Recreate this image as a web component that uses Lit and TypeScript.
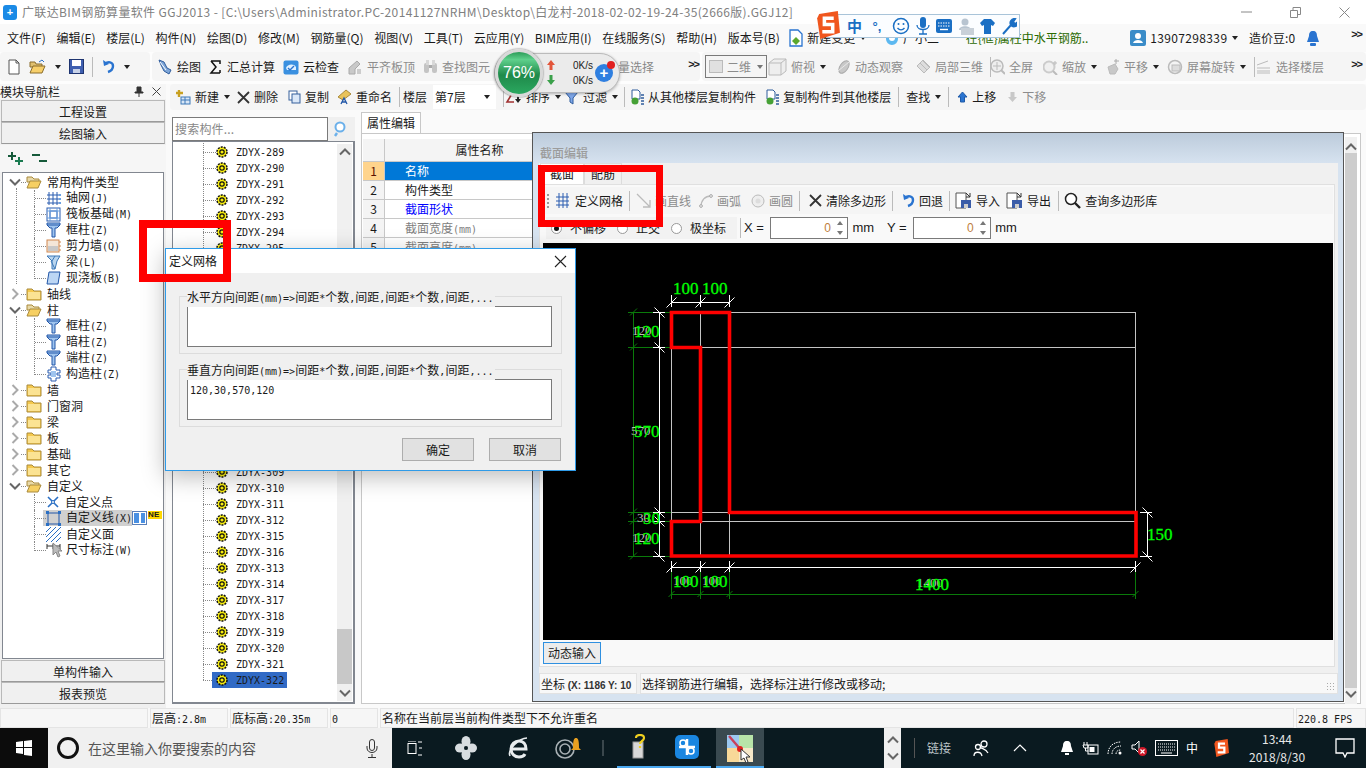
import { LitElement, html, css, svg, nothing } from 'lit';
import { customElement } from 'lit/decorators.js';

const ic = (w: number, h: number, body: unknown) =>
  html`<svg class="ic" width=${w} height=${h} viewBox="0 0 ${w} ${h}">${body}</svg>`;

// --- small icons, drawn roughly like the old toolbar bitmaps ---
const folderClosed = ic(16, 14, svg`<path d="M1 2h5l2 2h7v9H1z" fill="#f5c94e" stroke="#a98a3c"/><rect x="2" y="5" width="12" height="7" fill="#fbe393"/>`);
const folderOpen = ic(16, 14, svg`<path d="M1 2h5l2 2h5v3H1z" fill="#e8d9a8" stroke="#a98a3c"/><path d="M1 13l3-7h11l-3 7z" fill="#f6cf62" stroke="#a98a3c"/>`);
const pillar = ic(15, 16, svg`<path d="M1 1h13v2l-3 3h-2v9H6V6H4L1 3z" fill="#9fc4ee" stroke="#2257a8"/><path d="M1 3h13" stroke="#2257a8"/>`);
const axisGrid = ic(15, 15, svg`<g stroke="#2a5db0" fill="none"><path d="M3 1v13M7 1v13M11 1v13M1 4h12M1 8h12M1 12h12"/></g><g fill="#6aa0e0"><rect x="13" y="3" width="2" height="2"/><rect x="13" y="7" width="2" height="2"/><rect x="13" y="11" width="2" height="2"/></g>`);
const raft = ic(15, 15, svg`<rect x="1" y="1" width="13" height="13" fill="#fff" stroke="#2a5db0"/><rect x="4" y="4" width="7" height="7" fill="none" stroke="#2a5db0"/><path d="M1 4h13M1 11h13M4 1v13M11 1v13" stroke="#6aa0e0"/>`);
const wall = ic(15, 14, svg`<rect x="1" y="1" width="12" height="12" fill="#f4e6d8" stroke="#d08850"/><rect x="2" y="7" width="10" height="5" fill="#c8c8c8"/><path d="M13 3h2M13 7h2M13 11h2" stroke="#d08850"/>`);
const beam = ic(15, 16, svg`<path d="M1 2h13l-3 5-2 8H6V7z" fill="#b9d5ef" stroke="#3c78b8"/><path d="M5 7l4 8M9 2l-3 5" stroke="#3c78b8"/>`);
const slab = ic(15, 14, svg`<path d="M3 1h11l-2 12H1z" fill="#bcd6f4" stroke="#2257a8"/>`);
const construct = ic(15, 16, svg`<path d="M5 1h5v3h4v3h-3v2h3v3h-4v3H5v-3H2V9h3V7H2V4h3z" fill="#fff" stroke="#2a5db0"/><rect x="5" y="5" width="5" height="6" fill="#9fc4ee"/>`);
const cross = ic(14, 14, svg`<path d="M2 2l10 10M12 2L2 12" stroke="#2a6fc4" stroke-width="1.6"/><circle cx="7" cy="7" r="1.5" fill="#fff" stroke="#2a6fc4"/>`);
const cusLine = ic(15, 15, svg`<rect x="2" y="2" width="11" height="11" fill="none" stroke="#2257a8"/><g fill="#2a6fc4"><rect x="0" y="0" width="3" height="3"/><rect x="12" y="0" width="3" height="3"/><rect x="0" y="12" width="3" height="3"/><rect x="12" y="12" width="3" height="3"/></g>`);
const hatch = ic(15, 15, svg`<g stroke="#2a6fc4"><path d="M0 5L5 0M0 10L10 0M0 15L15 0M5 15L15 5M10 15L15 10"/></g>`);
const dimIcon = ic(15, 15, svg`<path d="M1 3h13M1 1v5M14 1v5M7 1v5" stroke="#333" fill="none"/>`);
const gear = ic(12, 12, svg`<circle cx="6" cy="6" r="5" fill="#f8ee10" stroke="#111" stroke-width="1.5" stroke-dasharray="2 1.1"/><circle cx="6" cy="6" r="2.2" fill="none" stroke="#111" stroke-width="1.2"/>`);
const pageNew = ic(14, 16, svg`<path d="M2 1h7l3 3v11H2z" fill="#fff" stroke="#555"/><path d="M9 1v3h3" fill="none" stroke="#555"/>`);
const openFolder = ic(17, 15, svg`<path d="M1 3h5l1 2h6v3H1z" fill="#e0c070" stroke="#8a6d2c"/><path d="M1 14l3-7h12l-3 7z" fill="#f7cf6a" stroke="#8a6d2c"/><path d="M10 3l3-2 2 2" fill="none" stroke="#2a6fc4"/>`);
const save = ic(15, 15, svg`<rect x="0.5" y="0.5" width="14" height="14" fill="#3f5fb0" stroke="#1e3470"/><rect x="3" y="1" width="9" height="6" fill="#fff"/><rect x="4" y="10" width="7" height="4" fill="#c8d2e8"/>`);
const undo = ic(14, 15, svg`<path d="M2 1l1 6 5-2" fill="#2a74d0"/><path d="M4 5c3-3 8-2 8 2 0 3-2 5-5 6" fill="none" stroke="#2a74d0" stroke-width="2.4"/>`);
const draw = ic(16, 17, svg`<path d="M2 2l5 2 3 6 4 2-2 4-5-3-3-6z" fill="#7ea6d8" stroke="#2f5c9c"/><path d="M3 4l6 8" stroke="#fff"/>`);
const sigma = ic(14, 14, svg`<path d="M2 1h9v3M11 13H2l5-6-5-6M11 10v3" fill="none" stroke="#111" stroke-width="1.5"/>`);
const cloudCheck = ic(16, 16, svg`<rect x="0.5" y="1.5" width="15" height="14" rx="2" fill="#3a90e0"/><path d="M3 9c1-4 8-5 10-1v3H4z" fill="#dff0ff"/><path d="M5 9l2 2 4-4" fill="none" stroke="#2a74d0" stroke-width="1.4"/>`);
const gLevel = ic(16, 16, svg`<path d="M2 9l8-7 3 3-5 5v5H2z" fill="#c9c9c9" stroke="#aaa"/><rect x="10" y="10" width="4" height="5" fill="#ccc"/>`);
const binoc = ic(15, 15, svg`<rect x="1" y="4" width="5" height="10" rx="2" fill="#c4c4c4"/><rect x="9" y="4" width="5" height="10" rx="2" fill="#c4c4c4"/><rect x="3" y="1" width="3" height="5" fill="#d8d8d8"/><rect x="9" y="1" width="3" height="5" fill="#d8d8d8"/><rect x="6" y="6" width="3" height="3" fill="#aaa"/>`);
const cube = ic(19, 18, svg`<path d="M1 5l5-4h12v12l-5 4H1zM1 5h12v12M13 5l5-4" fill="#eee" stroke="#bbb"/>`);
const orbit = ic(15, 16, svg`<ellipse cx="8" cy="8" rx="4" ry="7" transform="rotate(35 8 8)" fill="#c8c8c8" stroke="#aaa"/><path d="M2 12l11-9" stroke="#e8e8e8"/>`);
const part3d = ic(16, 15, svg`<path d="M2 7l6-6 7 7-6 6z" fill="#ddd" stroke="#bbb"/><path d="M5 4l7 7M8 2l6 6" stroke="#bbb"/>`);
const zoomAll = ic(15, 16, svg`<circle cx="7" cy="7" r="6" fill="#eee" stroke="#bbb" stroke-width="1.5"/><path d="M7 3v8M3 7h8" stroke="#bbb"/><path d="M11 11l4 4" stroke="#bbb" stroke-width="2"/>`);
const zoomIn = ic(15, 16, svg`<circle cx="6" cy="8" r="5.5" fill="#f0f0f0" stroke="#ccc" stroke-width="2"/><path d="M10 12l4 4" stroke="#bbb" stroke-width="2"/><path d="M12 2v4M10 4h4" stroke="#bbb"/>`);
const pan = ic(15, 17, svg`<path d="M3 9l7-3 3 5-3 5H5z" fill="#c8c8c8" stroke="#bbb"/><path d="M11 1v5M9 3h5" stroke="#aaa"/>`);
const rotate = ic(16, 16, svg`<circle cx="8" cy="8" r="6.5" fill="#f4f4f4" stroke="#bbb" stroke-width="1.5"/><rect x="5" y="6" width="8" height="6" fill="#ddd" stroke="#bbb"/>`);
const floors = ic(16, 15, svg`<path d="M1 6l11-4M1 9h13M1 12h13M1 14h13" stroke="#bbb" fill="none"/>`);
const plusNew = ic(16, 16, svg`<path d="M4 1v7M1 4h7" stroke="#c8a020" stroke-width="2.4"/><rect x="6" y="8" width="9" height="7" fill="#d8e6f6" stroke="#3c78b8"/><path d="M6 11h9M10 8v7" stroke="#3c78b8"/>`);
const xMark = ic(13, 13, svg`<path d="M1 1l11 11M12 1L1 12" stroke="#333" stroke-width="1.8"/>`);
const copy = ic(13, 14, svg`<rect x="1" y="1" width="8" height="9" fill="#fff" stroke="#36609c"/><rect x="4" y="4" width="8" height="9" fill="#dbe8f8" stroke="#36609c"/>`);
const rename = ic(15, 16, svg`<path d="M1 8l8-7 5 4-8 6z" fill="#e9c35a" stroke="#a98a3c"/><path d="M4 15l3-6 3 6M5 13h4" fill="none" stroke="#2257a8" stroke-width="1.3"/>`);
const sortIcon = ic(17, 14, svg`<path d="M1 2h7L2 12h7" fill="none" stroke="#a03030" stroke-width="1.6"/><path d="M13 1v9" stroke="#222" stroke-width="2"/><path d="M10 9h6l-3 4z" fill="#222"/>`);
const funnel = ic(15, 15, svg`<path d="M1 2h13L9 8v6l-3-2V8z" fill="#7ea6e8" stroke="#2f5c9c"/>`);
const copyFloor = ic(14, 17, svg`<path d="M2 1h6l2 2v7H2z" fill="#fff" stroke="#2f5c9c"/><circle cx="5" cy="12" r="3.5" fill="#45a035"/><path d="M11 6h3M11 9h3M11 12h3M11 15h3" stroke="#2f5c9c" stroke-width="1.4"/>`);
const arrowUp = ic(11, 12, svg`<path d="M5.5 1L10 6H7.5v5h-4V6H1z" fill="#2a74d0" stroke="#1e5aa8"/>`);
const arrowDown = ic(11, 12, svg`<path d="M5.5 11L10 6H7.5V1h-4v5H1z" fill="#c8c8c8"/>`);
const pageGreen = ic(14, 18, svg`<path d="M1 1h8l4 4v12H1z" fill="#fff" stroke="#2a74d0" stroke-width="1.3"/><path d="M7 8l4 4-4 4-4-4z" fill="#5ca82c"/>`);
const helper = ic(14, 16, svg`<path d="M1 3c4 2 8 2 12 0v6a6 6 0 01-12 0z" fill="#5cb8f0"/><circle cx="7" cy="8" r="3" fill="#fff"/>`);
const userBox = ic(16, 16, svg`<rect width="16" height="16" rx="2" fill="#3a8cc8"/><circle cx="8" cy="6" r="3" fill="#fff"/><path d="M3 13c1-4 9-4 10 0z" fill="#fff"/>`);
const bell = ic(14, 17, svg`<path d="M7 1c3 0 4 2 4 5l2 6H1l2-6c0-3 1-5 4-5z" fill="#2a74d0"/><rect x="4" y="13" width="6" height="3" rx="1" fill="#2a74d0"/>`);
const pin = ic(10, 11, svg`<path d="M3 1h4v5h2v1H1V6h2zM5 7v4" fill="#333" stroke="#333"/>`);
const plusLeft = ic(17, 15, svg`<path d="M5 1v8M1 5h8" stroke="#165a3a" stroke-width="2"/><path d="M12 6v8M8 10h8" stroke="#1a7a50" stroke-width="2"/>`);
const minusLeft = ic(17, 15, svg`<path d="M1 4h8M8 10h8" stroke="#165a3a" stroke-width="2"/>`);
const mag = ic(16, 16, svg`<circle cx="7" cy="6" r="4.5" fill="#fff" stroke="#6bb0ea" stroke-width="2"/><path d="M4 12l-2 3" stroke="#6bb0ea" stroke-width="2.4"/>`);
const grid = ic(15, 15, svg`<g stroke="#2a5db0" fill="none"><path d="M3 0v15M7 0v15M11 0v15M0 4h13M0 8h13M0 12h13"/></g>`);
const arrowLine = ic(15, 15, svg`<path d="M1 1l13 13M14 7v7H7" fill="none" stroke="#bbb" stroke-width="1.3"/>`);
const arc = ic(14, 14, svg`<path d="M2 13C2 6 6 2 12 2" fill="none" stroke="#bbb" stroke-width="1.4"/><circle cx="2" cy="12" r="1.4" fill="#eee" stroke="#aaa"/><circle cx="12" cy="2" r="1.4" fill="#eee" stroke="#aaa"/>`);
const ring = ic(14, 14, svg`<circle cx="7" cy="7" r="6" fill="#eee" stroke="#bbb"/><circle cx="7" cy="7" r="2.5" fill="#ddd"/>`);
const floppyIn = ic(17, 17, svg`<path d="M1 1h10v15H1z" fill="#fff" stroke="#555"/><rect x="6" y="8" width="10" height="8" fill="#3a5ca8"/><rect x="9" y="12" width="4" height="4" fill="#ccc"/><path d="M11 1l4 4M15 1v4h-4" fill="none" stroke="#333"/>`);
const search = ic(17, 17, svg`<circle cx="7" cy="7" r="5.5" fill="#fff" stroke="#222" stroke-width="1.5"/><path d="M11 11l5 5" stroke="#222" stroke-width="2.4"/>`);

const win = ic(16, 16, svg`<path d="M0 2l7-1v6H0zM8 1l8-1v7H8zM0 8h7v6l-7-1zM8 8h8v8l-8-1z" fill="#fff"/>`);
const taskView = ic(15, 15, svg`<rect x="1" y="2.5" width="8" height="10" fill="none" stroke="#fff"/><path d="M11 1h4M12 7h3M11 14h4M1 0h8" stroke="#fff"/>`);
const fan = ic(22, 24, svg`<g fill="#d8dde0"><ellipse cx="11" cy="5.5" rx="4.5" ry="5.5"/><ellipse cx="11" cy="18.5" rx="4.5" ry="5.5"/><ellipse cx="5" cy="12" rx="5" ry="4.5"/><ellipse cx="17" cy="12" rx="5" ry="4.5"/></g><circle cx="11" cy="12" r="2" fill="#0a1a20"/>`);
const ie = ic(22, 24, svg`<path d="M4 13h15c0-5-3-8-7-8s-8 3-8 8 4 8 8 8c3 0 5-1 6-3" fill="none" stroke="#e8ecee" stroke-width="3"/><path d="M3 20C0 14 12 2 20 2" fill="none" stroke="#e8ecee" stroke-width="1.6"/>`);
const swirl = ic(28, 24, svg`<path d="M12 4a9 9 0 100 18 9 9 0 000-18zM12 8a5 5 0 100 10 5 5 0 000-10" fill="none" stroke="#a8b0b4" stroke-width="1.6"/><path d="M20 12c0-8 1-10 3-10s3 2 3 10l2 2H18z" fill="#e8a020"/>`);
const quest = ic(18, 26, svg`<rect x="1" y="8" width="10" height="16" fill="#d8d8d8" stroke="#999"/><path d="M4 4c0-4 8-4 8 0 0 3-4 3-4 6M8 12v2" fill="none" stroke="#f0d020" stroke-width="2.2"/>`);
const bluePlus = ic(24, 24, svg`<rect width="24" height="24" rx="5" fill="#1a86e0"/><path d="M12 4v16M4 12h16" stroke="#fff" stroke-width="2.5"/><circle cx="8" cy="8" r="3" fill="none" stroke="#fff" stroke-width="1.5"/><circle cx="16" cy="16" r="3" fill="none" stroke="#fff" stroke-width="1.5"/>`);
const mapApp = ic(30, 32, svg`<rect x="2" y="4" width="12" height="13" fill="#9cc8f0"/><rect x="14" y="4" width="14" height="13" fill="#b8e4a8"/><rect x="2" y="17" width="12" height="14" fill="#f8d898"/><rect x="14" y="17" width="14" height="14" fill="#f6e8c8"/><path d="M4 5l12 14" stroke="#c8405a" stroke-width="2.4"/><circle cx="15" cy="18" r="3" fill="#e02020"/><path d="M16 18v11l3-2 2 5 2-1-2-5h4z" fill="#fff" stroke="#333"/>`);
const person = ic(16, 18, svg`<circle cx="11" cy="5" r="3" fill="none" stroke="#fff" stroke-width="1.3"/><circle cx="5" cy="8" r="2.5" fill="none" stroke="#fff" stroke-width="1.3"/><path d="M1 17c0-5 7-5 8 0M7 8c2 2 6 2 8 6" fill="none" stroke="#fff" stroke-width="1.3"/>`);
const caretUp = ic(14, 8, svg`<path d="M1 7l6-6 6 6" fill="none" stroke="#fff" stroke-width="1.2"/>`);
const trayBell = ic(14, 16, svg`<path d="M7 1c3 0 4 2 4 5l2 6H1l2-6c0-3 1-5 4-5zM5 13h4v2H5z" fill="#fff"/>`);
const plug = ic(17, 14, svg`<path d="M2 1v3M5 1v3M1 4h5v3H2z" stroke="#fff" fill="none"/><path d="M3.5 7v3h3" stroke="#fff" fill="none"/><rect x="6" y="4" width="10" height="9" fill="none" stroke="#fff"/><rect x="7.5" y="6" width="5" height="5" fill="#fff"/>`);
const wifi = ic(16, 14, svg`<g fill="none" stroke="#fff" stroke-dasharray="1.5 1"><path d="M1 13c0-7 5-12 13-12"/><path d="M5 13c0-4 3-8 9-8"/><path d="M9 13c0-2 1-4 5-4"/></g><circle cx="13" cy="12" r="1.5" fill="#fff"/>`);
const speaker = ic(16, 16, svg`<path d="M1 5h3l4-4v12L4 9H1z" fill="none" stroke="#fff"/><circle cx="11.5" cy="11.5" r="4.5" fill="#d01828"/><path d="M9.5 9.5l4 4M13.5 9.5l-4 4" stroke="#fff" stroke-width="1.2"/>`);
const keyb = ic(23, 16, svg`<rect x="0.5" y="0.5" width="22" height="15" fill="none" stroke="#fff"/><path d="M3 4h17M3 7h17M3 10h17" stroke="#fff" stroke-dasharray="1 1"/><path d="M6 13h11" stroke="#fff"/>`);
const sogouS = (w: number, h: number) => html`<svg class="ic" width=${w} height=${h} viewBox="0 0 24 27"><path d="M4 3l18-3 2 21-19 6-3-20z" fill="#f0561e"/><path d="M18 7H9v6h8v7H7" fill="none" stroke="#fff" stroke-width="3.4"/></svg>`;
const notif = ic(20, 20, svg`<path d="M1 1h18v14h-7l-2 4-2-4H1z" fill="none" stroke="#fff" stroke-width="1.3"/>`);
const chevR = ic(8, 12, svg`<path d="M1.5 1l5 5-5 5" fill="none" stroke="#aaa" stroke-width="2"/>`);
const chevD = ic(12, 8, svg`<path d="M1 1.5l5 5 5-5" fill="none" stroke="#666" stroke-width="2"/>`);
const chevU = ic(12, 8, svg`<path d="M1 6.5l5-5 5 5" fill="none" stroke="#666" stroke-width="2"/>`);

// split ascii out so latin sits at half the width of a cjk character, like SimSun
const bitmap = (s: string) =>
  s.split(/([\x20-\x7e]+)/).map((p, i) => (i % 2 ? html`<span class="lat">${p}</span>` : p));

interface TreeRow { lv: number; label: string; open?: boolean; icon?: unknown; last?: boolean; sel?: boolean; }
const tree: TreeRow[] = [
  { lv: 0, open: true, label: '常用构件类型' },
  { lv: 1, icon: axisGrid, label: '轴网(J)' },
  { lv: 1, icon: raft, label: '筏板基础(M)' },
  { lv: 1, icon: pillar, label: '框柱(Z)' },
  { lv: 1, icon: wall, label: '剪力墙(Q)' },
  { lv: 1, icon: beam, label: '梁(L)' },
  { lv: 1, icon: slab, label: '现浇板(B)', last: true },
  { lv: 0, label: '轴线' },
  { lv: 0, open: true, label: '柱' },
  { lv: 1, icon: pillar, label: '框柱(Z)' },
  { lv: 1, icon: pillar, label: '暗柱(Z)' },
  { lv: 1, icon: pillar, label: '端柱(Z)' },
  { lv: 1, icon: construct, label: '构造柱(Z)', last: true },
  { lv: 0, label: '墙' },
  { lv: 0, label: '门窗洞' },
  { lv: 0, label: '梁' },
  { lv: 0, label: '板' },
  { lv: 0, label: '基础' },
  { lv: 0, label: '其它' },
  { lv: 0, open: true, label: '自定义' },
  { lv: 1, icon: cross, label: '自定义点' },
  { lv: 1, icon: cusLine, label: '自定义线(X)', sel: true },
  { lv: 1, icon: hatch, label: '自定义面' },
  { lv: 1, icon: dimIcon, label: '尺寸标注(W)', last: true },
];

const listNames = [
  289, 290, 291, 292, 293, 294, 295, 296, 297, 298, 299, 300, 301, 302, 303, 304, 305, 306, 307, 308, 309, 310, 311,
  312, 315, 316, 313, 314, 317, 318, 319, 320, 321, 322,
];

// g is the extra space before an item, the toolbars are not evenly spaced
interface Tool { i?: unknown; t?: string; c?: boolean; d?: boolean; sep?: boolean; g?: number; }
const barB: Tool[] = [
  { i: draw, t: '绘图' },
  { i: sigma, t: '汇总计算' },
  { i: cloudCheck, t: '云检查' },
  { i: gLevel, t: '平齐板顶', d: true },
  { i: binoc, t: '查找图元', d: true },
];
const barC: Tool[] = [
  { i: cube, t: '俯视', c: true, d: true, g: -7 },
  { i: orbit, t: '动态观察', d: true, g: 2 },
  { i: part3d, t: '局部三维', d: true, g: 4 },
  { sep: true, g: -1 },
  { i: zoomAll, t: '全屏', d: true, g: -9 },
  { i: zoomIn, t: '缩放', c: true, d: true, g: 2 },
  { i: pan, t: '平移', c: true, d: true },
  { i: rotate, t: '屏幕旋转', c: true, d: true },
  { sep: true },
  { i: floors, t: '选择楼层', d: true, g: -7 },
];
const secondLeft: Tool[] = [
  { i: plusNew, t: '新建', c: true },
  { i: xMark, t: '删除' },
  { i: copy, t: '复制', g: 3 },
  { i: rename, t: '重命名', g: 1 },
  { sep: true },
];
const secondRight: Tool[] = [
  { sep: true },
  { i: sortIcon, t: '排序', c: true, g: -6 },
  { i: funnel, t: '过滤', c: true, g: -4 },
  { sep: true, g: -1 },
  { i: copyFloor, t: '从其他楼层复制构件', g: -2 },
  { i: copyFloor, t: '复制构件到其他楼层', g: 2 },
  { sep: true },
  { t: '查找', c: true },
  { sep: true },
  { i: arrowUp, t: '上移', g: 1 },
  { i: arrowDown, t: '下移', d: true, g: 4 },
];
const editBar: Tool[] = [
  { i: grid, t: '定义网格' },
  { sep: true },
  { i: arrowLine, t: '画直线', d: true },
  { i: arc, t: '画弧', d: true, g: 2 },
  { i: ring, t: '画圆', d: true, g: 4 },
  { sep: true },
  { i: xMark, t: '清除多边形', g: 3 },
  { sep: true },
  { i: undo, t: '回退', g: 2 },
  { sep: true },
  { i: floppyIn, t: '导入', g: -1 },
  { i: floppyIn, t: '导出' },
  { sep: true, g: 1 },
  { i: search, t: '查询多边形库', g: -1 },
];
const menus = ['文件(F)', '编辑(E)', '楼层(L)', '构件(N)', '绘图(D)', '修改(M)', '钢筋量(Q)', '视图(V)', '工具(T)', '云应用(Y)', 'BIM应用(I)', '在线服务(S)', '帮助(H)', '版本号(B)'];

const tool = (x: Tool) => {
  const extra = x.g ? `margin-left:${x.g}px` : '';
  return x.sep
    ? html`<span class="sep" style=${extra}></span>`
    : html`<span class="tool ${x.d ? 'off' : ''}" style=${extra}>${x.i ?? nothing}<span>${x.t}</span>${x.c ? html`<i class="caret"></i>` : nothing}</span>`;
};

// section drawing, in screen coordinates through the viewBox
const cadX = [671.5, 700.5, 729.5, 1135.5];
const cadY = [312.5, 347.5, 512.5, 521.5, 556.5];
const tick = (x: number, y: number, flip = false) =>
  flip
    ? svg`<path d="M${x - 5} ${y - 5}L${x + 5} ${y + 5}" stroke="#fff"/>`
    : svg`<path d="M${x - 5} ${y + 5}L${x + 5} ${y - 5}" stroke="#fff"/>`;
const cad = svg`
  <g stroke="#c4c4c4" fill="none">
    ${cadX.map((x) => svg`<path d="M${x} 312V557"/>`)}
    ${cadY.map((y) => svg`<path d="M671 ${y}H1136"/>`)}
  </g>
  <g stroke="#0a7a0a" fill="none">
    <path d="M633.5 312V557"/>
    ${cadY.map((y) => svg`<path d="M628 ${y}H671"/><path d="M630 ${y + 3}l7 -7"/>`)}
    <path d="M671 594.5H1136"/>
    ${cadX.map((x) => svg`<path d="M${x} 572V599"/><path d="M${x - 3} 597l6 -6"/>`)}
  </g>
  <g stroke="#fff" fill="none">
    <path d="M671 302.5H730M659.5 312V557M671 567.5H1136M1147.5 512V557"/>
    ${cadX.slice(0, 3).map((x) => svg`<path d="M${x} 295V307"/>`)}
    ${cadY.map((y) => svg`<path d="M653 ${y}H665"/>`)}
    ${cadX.map((x) => svg`<path d="M${x} 561V572"/>`)}
    <path d="M1140 512.5H1152M1140 556.5H1152"/>
  </g>
  ${cadX.slice(0, 3).map((x) => tick(x, 302.5))}
  ${cadY.map((y) => tick(659.5, y, true))}
  ${cadX.map((x) => tick(x, 567.5))}
  ${tick(1147.5, 512.5, true)}${tick(1147.5, 556.5, true)}
  <path d="M671.5 312.5H729.5V512.5H1136V556H671.5V521.5H700.5V347.5H671.5Z" fill="none" stroke="#ff0000" stroke-width="3.6"/>
  <g class="gtext">
    <text x="632" y="335">120</text><text x="631" y="435">570</text><text x="637" y="522">30</text><text x="632" y="542">120</text>
    <text x="673" y="585">100</text><text x="702" y="585">100</text><text x="917" y="587">1400</text>
  </g>
  <g class="ctext">
    <text x="673" y="294">100</text><text x="702" y="294">100</text>
    <text x="634" y="337">120</text><text x="634" y="437">570</text><text x="643" y="524">30</text><text x="634" y="544">120</text>
    <text x="673" y="587">100</text><text x="702" y="587">100</text><text x="915" y="590">1400</text><text x="1147" y="540">150</text>
  </g>`;

@customElement('app-root')
export class AppRoot extends LitElement {
  static styles = css`
    :host {
      display: block;
      position: relative;
      width: 1366px;
      height: 768px;
      overflow: hidden;
      background: #fafafa;
      font-family: 'Noto Sans CJK SC', 'Liberation Sans', sans-serif;
      font-size: 12px;
      line-height: 16px;
      color: #1a1a1a;
    }
    * { box-sizing: border-box; }
    .ic { display: block; flex: none; }
    .lat { font-family: 'DejaVu Sans Mono', monospace; font-size: 10px; }
    .app { display: flex; flex-direction: column; height: 768px; }

    .title { height: 24px; flex: none; background: #fff; display: flex; align-items: center; padding-left: 3px; color: #808080; white-space: nowrap; }
    .title .text { margin-left: 5px; letter-spacing: 0.36px; }
    .logo { width: 14px; height: 15px; background: #1a8ae6; border-radius: 3px; color: #fff; font: 700 11px/14px 'Liberation Sans'; text-align: center; }
    .winbtn { margin-left: auto; display: flex; gap: 38px; padding-right: 16px; align-items: center; }

    .menu { height: 28px; flex: none; display: flex; align-items: center; padding-left: 7px; gap: 10.65px; white-space: nowrap; background: #f9f9f9; }
    .menu .gapped { display: flex; align-items: center; gap: 4px; }
    .menu .gapped.a { margin-left: -1px; }
    .menu .gapped.b { margin-left: 8px; }
    .news { margin-left: 16px; width: 125px; color: #2a6a00; }
    .menu .user { margin-left: 29px; }
    .menu .user > span { letter-spacing: 0.35px; }
    .chev { font: 700 11px/12px 'Liberation Sans'; letter-spacing: -1px; color: #222; }
    .menu .chev { margin-left: auto; margin-right: 4px; margin-top: -8px; }

    .tb1 { height: 32px; flex: none; display: flex; gap: 2px; padding-bottom: 3px; background: #fdfdfd; }
    .bar { display: flex; align-items: center; background: #f5f5f5; border-radius: 4px; gap: 8px; white-space: nowrap; }
    .bar.a { width: 150px; flex: none; padding-left: 7px; }
    .bar.b { width: 548px; flex: none; padding-left: 5px; gap: 8px; }
    .bar.c { flex: 1; min-width: 0; padding-left: 3px; gap: 8px; }
    .bar.a .chev { margin-left: 17px; margin-top: -6px; }
    .bar.b .chev { margin-left: auto; margin-right: 1px; margin-top: -6px; }
    .bar.c .chev { margin-left: auto; margin-right: 4px; margin-top: -6px; }
    .bar .last { margin-left: 120px; color: #888; }
    .tool { display: inline-flex; align-items: center; gap: 4px; }
    .tool.off { color: #8c8c8c; }
    .caret { display: block; width: 0; height: 0; border: 3px solid transparent; border-top: 4px solid #222; border-bottom: 0; margin-left: 1px; }
    .sep { display: block; width: 1px; height: 20px; background: #bbb; flex: none; }
    .mode { width: 62px; height: 23px; border: 1px solid #7a7a7a; display: flex; align-items: center; gap: 4px; padding-left: 3px; color: #8c8c8c; }
    .mode .box { width: 14px; height: 13px; background: #e0e0e0; border: 1px solid #bbb; }
    .mode .caret { margin-left: 2px; border-top-color: #777; }

    .work { flex: 1; min-height: 0; display: flex; }
    .nav { width: 166px; flex: none; display: flex; flex-direction: column; background: #f0f0f0; padding-bottom: 4px; }
    .nav-head { height: 15px; flex: none; display: flex; align-items: center; padding-right: 5px; gap: 8px; background: #f6f6f6; }
    .nav-head span:first-child { margin-right: auto; font-size: 12px; }
    .nav-btn { height: 22px; flex: none; margin: 0 1px; border: 1px solid #b9b9b9; border-bottom-color: #9a9a9a; background: #f0f0f0; text-align: center; line-height: 21px; }
    .nav-btn.top { margin-top: 1px; }
    .plus { height: 27px; flex: none; display: flex; align-items: center; gap: 7px; padding-left: 7px; background: #f6f6f6; margin-top: 1px; }
    .tree { flex: 1; margin: 0 2px 1px; border: 1px solid #828790; background: #fff; padding-top: 1px; position: relative; }
    .row { height: 16px; display: flex; align-items: center; white-space: nowrap; position: relative; }
    .row .exp { width: 12px; margin-left: 6px; display: flex; justify-content: center; }
    .row .dots { width: 5px; margin-left: 0; border-top: 1px dotted #888; }
    .row .nm { margin-left: 5px; }
    .row.ch { padding-left: 31px; }
    .row.ch .branch { width: 12px; height: 16px; border-left: 1px dotted #888; position: relative; flex: none; }
    .row.ch .branch::after { content: ''; position: absolute; left: 0; right: 0; top: 8px; border-top: 1px dotted #888; }
    .row.ch.last .branch { height: 9px; align-self: flex-start; }
    .row.ch .ic { margin-right: 5px; }
    .row.sel .mark { position: absolute; left: 40px; width: 89px; top: 0; bottom: 0; background: #d0d0d0; }
    .row.sel .ic, .row.sel .nm { position: relative; }
    .row.ch .nm { margin-left: 0; }
    .vline { position: absolute; left: 13px; border-left: 1px dotted #888; width: 0; }
    .vline.one { top: 15px; height: 96px; }
    .vline.two { top: 143px; height: 64px; }
    .cols { position: absolute; left: 129px; top: 1px; width: 15px; height: 14px; border: 1px solid #5a7fb8; background: #fff; display: flex; gap: 2px; padding: 1px; }
    .cols i { flex: 1; background: #4a90e2; }
    .newbadge { position: absolute; left: 145px; top: 1px; width: 14px; height: 8px; background: #ffd800; font: 700 8px/8px 'Liberation Sans'; overflow: hidden; letter-spacing: 0.2px; }
    .cursor { position: absolute; left: 49px; top: 369px; }

    .main { flex: 1; min-width: 0; display: flex; flex-direction: column; }
    .second { height: 26px; flex: none; margin-left: 4px; display: flex; align-items: center; gap: 7px; padding-left: 5px; background: #f5f5f5; white-space: nowrap; border-radius: 4px; }
    .second .lbl { margin-left: -4px; }
    .floor { width: 63px; height: 24px; background: #fff; display: flex; align-items: center; justify-content: space-between; padding: 0 6px 0 2px; margin-left: -1px; }
    .panes { flex: 1; min-height: 0; display: flex; padding-top: 7px; }
    .listpane { width: 183px; margin-left: 6px; flex: none; display: flex; flex-direction: column; height: 587px; }
    .search { display: flex; height: 24px; flex: none; background: #f0f0f0; }
    .search .in { width: 156px; border: 1px solid #7a7a7a; background: #fff; color: #888; font-size: 12px; padding: 3px 0 0 2px; letter-spacing: 0.2px; }
    .search .btn { width: 26px; display: flex; align-items: center; justify-content: center; }
    .list { flex: 1; min-height: 0; border: 1px solid #828790; border-width: 1px 2px 2px 1px; background: #fff; position: relative; overflow: hidden; padding-top: 2px; }
    .li { height: 16px; display: flex; align-items: center; padding-left: 30px; position: relative; white-space: nowrap; }
    .li::before { content: ''; position: absolute; left: 30px; top: -8px; height: 16px; border-left: 1px dotted #888; }
    .li .h { width: 13px; border-top: 1px dotted #888; }
    .li .nm { margin-left: 8px; }
    .li.sel::after { content: ''; position: absolute; left: 39px; width: 75px; top: 0; bottom: 0; background: #316ac5; z-index: 0; }
    .li.sel .ic, .li.sel .nm { position: relative; z-index: 1; }
    .scroll { position: absolute; top: 2px; right: 1px; bottom: 1px; width: 15px; background: #f0f0f0; display: flex; flex-direction: column; align-items: center; justify-content: space-between; padding: 4px 0; }
    .thumb { position: absolute; left: 0; right: 0; bottom: 17px; height: 55px; background: #c8c8c8; }
    .props { flex: 1; min-width: 0; margin: -5px 5px 0 6px; display: flex; flex-direction: column; height: 592px; }
    .ptab { width: 60px; height: 21px; flex: none; border: 1px solid #c8c8c8; border-bottom: 0; background: #fff; text-align: center; line-height: 19px; position: relative; }
    .pbody { flex: 1; border: 1px solid #c8c8c8; background: #fff; padding-top: 5px; padding-left: 1px; }
    .grid { display: grid; grid-template-columns: 22px 500px; }
    .grid > div { height: 19px; border-right: 1px solid #c8c8c8; border-bottom: 1px solid #c8c8c8; padding-left: 20px; line-height: 18px; white-space: nowrap; }
    .grid .n { padding-left: 0; text-align: center; background: #f4f4f4; }
    .grid .hd { height: 23px; background: #f4f4f4; text-align: center; line-height: 22px; padding: 0 310px 0 0; font-size: 12px; }
    .grid .hd.corner { padding: 0; }
    .grid .n.on { background: #ffd48c; color: #5a1000; }
    .grid .on2 { background: #0078d7; color: #fff; }
    .grid .blue { color: #0000ff; }
    .grid .gray { color: #808080; }
    .pscroll { position: absolute; left: 1345px; top: 137px; width: 12px; height: 567px; background: #f0f0f0; display: flex; flex-direction: column; justify-content: space-between; align-items: center; padding: 6px 0; }
    .pscroll .thumb2 { position: absolute; left: 0; right: 0; top: 16px; bottom: 16px; background: #cdcdcd; }
    .pscroll .ic { position: relative; }

    .win { position: absolute; left: 532px; top: 132px; width: 812px; height: 570px; border: 1px solid #555; background: linear-gradient(#bccbdb, #d7e3f0 31px); display: flex; flex-direction: column; padding: 0 5px 7px 6px; }
    .win .wt { height: 30px; flex: none; color: #9c9c9c; padding: 12px 0 0 1px; line-height: 16px; font-weight: 500; }
    .win .inner { flex: 1; min-height: 0; background: #f0f0f0; display: flex; flex-direction: column; }
    .tabs { display: flex; height: 21px; flex: none; padding-left: 1px; }
    .tabs span { width: 38px; border: 1px solid #dcdcdc; border-bottom: 0; text-align: center; line-height: 20px; }
    .tabs span.on { width: 44px; background: #fff; border-color: #ddd; }
    .page { flex: 1; min-height: 0; background: #f9f9f9; border: 1px solid #e0e0e0; margin-right: 3px; padding: 2px 1px 0 1px; display: flex; flex-direction: column; margin-left: 0; }
    .edit { height: 27px; flex: none; display: flex; align-items: center; gap: 6px; background: #f5f5f5; padding-left: 6px; white-space: nowrap; }
    .grip { width: 2px; height: 14px; background: repeating-linear-gradient(#999 0 2px, transparent 2px 4px); flex: none; margin-right: 1px; }
    .fields { height: 26px; flex: none; display: flex; align-items: center; padding: 2px 0 0 5px; white-space: nowrap; }
    .radios { display: flex; align-items: center; gap: 11px; background: #f2f2f2; height: 22px; padding: 0 12px 0 5px; width: 191px; }
    .rd { display: inline-flex; align-items: center; gap: 8px; }
    .rd i { display: block; width: 11px; height: 11px; border: 1px solid #999; border-radius: 50%; background: #fff; position: relative; }
    .rd i.on::after { content: ''; position: absolute; left: 2px; top: 2px; width: 5px; height: 5px; border-radius: 50%; background: #111; }
    .fields .sep { margin: 0 3px 0 3px; }
    .fields .lab { font-family: 'Liberation Sans'; font-size: 13px; }
    .fields .mm { margin-left: 4.5px; }
    .fields .yy { margin-left: 13px; }
    .num { width: 78px; height: 22px; margin-left: 6px; border: 1px solid #7a7a7a; background: #fff; display: flex; align-items: center; justify-content: flex-end; color: #c08040; font-family: 'Liberation Sans'; font-size: 12px; position: relative; padding-right: 16px; }
    .num::before, .num::after { content: ''; position: absolute; right: 4px; border: 3px solid transparent; }
    .num::before { top: 3px; border-bottom: 4px solid #777; border-top: 0; }
    .num::after { bottom: 3px; border-top: 4px solid #777; border-bottom: 0; }
    .cad { display: block; flex: none; background: #000; width: 790px; height: 397px; margin-top: 3px; margin-left: 2px; }
    .cad .ctext text { fill: #00ff00; stroke: #00ff00; stroke-width: 0.3px; font: 17px 'Liberation Serif', serif; }
    .cad .gtext text { fill: #bdbdbd; font: 13px 'Liberation Serif', serif; }
    .dyn { flex: 1; padding: 2px 0 0 2px; }
    .dyn span { display: block; width: 58px; height: 22px; border: 1px solid #2f90e0; background: #ececec; text-align: center; line-height: 20px; }
    .wstat { display: flex; height: 21px; flex: none; gap: 3px; margin: 6px 0 0 0; }
    .wstat div { background: #f8f8f8; border: 1px solid #e2e2e2; white-space: nowrap; overflow: hidden; padding-left: 1px; line-height: 19px; }
    .wstat .c1 { width: 98px; }
    .wstat .c1 .co { font: 700 10px 'Liberation Sans'; color: #333; }
    .wstat .c2 { flex: 1; position: relative; }
    .wstat .c2::after { content: ''; position: absolute; right: 1px; bottom: 1px; width: 10px; height: 10px; background: radial-gradient(#aaa 0.7px, transparent 1px) 0 0 / 3px 3px; }

    .status { height: 20px; flex: none; display: flex; gap: 2px; padding-top: 0; background: #f8f8f8; white-space: nowrap; }
    .status div { border: 1px solid #e4e4e4; background: #f6f6f6; padding-left: 1px; line-height: 18px; }
    .status .s0 { width: 148px; }
    .status .s1 { width: 78px; }
    .status .s2 { width: 98px; }
    .status .s3 { width: 48px; }
    .status .s4 { flex: 1; }
    .status .s5 { width: 70px; }

    .task { height: 40px; flex: none; display: flex; align-items: center; background: #0a1a20; color: #eee; }
    .start { width: 48px; height: 40px; background: #0c0c0c; display: flex; align-items: center; justify-content: center; }
    .find { width: 344px; height: 40px; background: #f0f0f0; display: flex; align-items: center; color: #555; font-size: 14px; padding-left: 9px; }
    .find .o { width: 22px; height: 22px; border: 3px solid #111; border-radius: 50%; margin-right: 9px; flex: none; }
    .find .mic { margin-left: auto; margin-right: 14px; }
    .apps { display: flex; align-items: center; height: 40px; padding-left: 15px; }
    .apps .a1 { margin-left: 33px; }
    .apps .a2 { margin-left: 30px; }
    .apps .a3 { margin-left: 24px; }
    .apps .line { width: 2px; height: 16px; background: #3a474c; margin-left: 21px; }
    .active { width: 48px; height: 40px; background: #3a4a50; border-bottom: 2px solid #4aa8f0; display: flex; align-items: center; justify-content: center; margin-left: 5px; }
    .under { width: 48px; height: 40px; display: flex; align-items: center; justify-content: center; border-bottom: 2px solid #4aa8f0; margin-left: -2px; }
    .under.q { margin-left: 13px; }
    .updown { width: 17px; height: 40px; background: #f0f0f0; margin-left: 120px; display: flex; flex-direction: column; justify-content: space-evenly; align-items: center; }
    .tray { flex: 1; display: flex; align-items: center; padding-left: 13px; color: #bcc4c8; }
    .tray .line { width: 1px; height: 20px; background: #555; }
    .tray .gap { margin-left: 12px; }
    .tray .g2 { margin-left: 22px; }
    .tray .g3 { margin-left: 24px; }
    .tray .g4 { margin-left: 33px; }
    .tray .g5 { margin-left: 8px; }
    .tray .zh { margin-left: 8px; color: #fff; }
    .tray .s { margin-left: 15px; }
    .clock { margin-left: 18px; text-align: center; color: #e8e8e8; line-height: 18px; width: 60px; }
    .tray .nt { margin-left: 28px; }

    .speed { position: absolute; left: 494px; top: 53px; width: 126px; height: 40px; border-radius: 20px; background: #ebebeb; border: 1px solid #bbb; box-shadow: 0 1px 3px #0004; }
    .speed .ball { position: absolute; left: 0; top: -5px; width: 48px; height: 48px; border-radius: 50%; border: 3px solid #d9d9d9; background: linear-gradient(#2c9c58, #5fd08c 18%, #1f8a4a 55%, #2ba860); box-shadow: 0 0 2px #555; color: #fff; font: 16px/42px 'Liberation Sans'; text-align: center; }
    .speed .r { position: absolute; left: 78px; font: 10px/12px 'Liberation Sans'; color: #222; }
    .speed .r.top { top: 6px; }
    .speed .r.bot { top: 21px; }
    .speed .up { position: absolute; left: 52px; top: 6px; }
    .speed .dn { position: absolute; left: 52px; top: 21px; }
    .speed .pl { position: absolute; left: 100px; top: 10px; width: 18px; height: 18px; border-radius: 50%; background: #2f7fe0; color: #fff; font: 700 15px/18px 'Liberation Sans'; text-align: center; }
    .speed .dot { position: absolute; left: 112px; top: 7px; width: 8px; height: 8px; border-radius: 50%; background: #e02020; }

    .ime { position: absolute; left: 826px; top: 14px; width: 194px; height: 24px; border: 1px solid #a9c4d9; background: #fbfdff; display: flex; align-items: center; gap: 6px; padding-left: 20px; color: #1a6fc4; }
    .ime b { font-size: 15px; font-weight: 700; }
    .ime .punct { font: 700 13px 'Liberation Sans'; width: 18px; text-align: center; }
    .s-logo { position: absolute; left: 815px; top: 11px; }

    .red { position: absolute; border: 7px solid #ff0000; z-index: 3; }
    .red.one { left: 538px; top: 165px; width: 125px; height: 62px; }
    .red.two { left: 139px; top: 220px; width: 92px; height: 62px; border-width: 8px; }

    .dlg { position: absolute; z-index: 2; left: 165px; top: 248px; width: 411px; height: 223px; border: 1px solid #2f9be8; background: #f0f0f0; box-shadow: 0 6px 22px #0004; display: flex; flex-direction: column; padding: 0 13px 0 13px; }
    .dlg .dt { height: 24px; margin: 0 -13px; background: #fff; flex: none; display: flex; align-items: center; justify-content: space-between; padding: 0 8px 0 3px; }
    .dlg .dt span { font-size: 12px; }
    .grp { height: 58px; flex: none; margin-top: 23px; border: 1px solid #dcdcdc; padding: 9px 9px 0 7px; position: relative; }
    .grp + .grp { margin-top: 15px; }
    .grp label { position: absolute; left: 7px; top: -8px; background: #f0f0f0; padding: 0 2px 0 0; white-space: nowrap; }
    .grp .ta { height: 41px; border: 1px solid #7a7a7a; background: #fff; padding: 1px 2px; }
    .btns { display: flex; justify-content: flex-end; gap: 15px; margin-top: 11px; padding-right: 1px; }
    .btns span { width: 72px; height: 23px; border: 1px solid #adadad; background: #e1e1e1; text-align: center; line-height: 21px; }
  `;

  render() {
    return html`
      <div class="app">
        ${this.renderTitle()} ${this.renderMenu()} ${this.renderToolbar()}
        <div class="work">
          ${this.renderNav()}
          <div class="main">
            ${this.renderSecond()}
            <div class="panes">${this.renderList()} ${this.renderProps()}</div>
          </div>
        </div>
        ${this.renderStatus()} ${this.renderTask()}
      </div>
      ${this.renderWindow()} ${this.renderDialog()} ${this.renderOverlays()}
    `;
  }

  renderTitle() {
    return html`<div class="title">
      <div class="logo">+</div>
      <span class="text">广联达BIM钢筋算量软件 GGJ2013 - [C:\\Users\\Administrator.PC-20141127NRHM\\Desktop\\白龙村-2018-02-02-19-24-35(2666版).GGJ12]</span>
      <div class="winbtn">
        ${ic(11, 2, svg`<path d="M0 1h11" stroke="#888"/>`)}
        ${ic(11, 11, svg`<path d="M0.5 3.5h7v7h-7zM3 3V0.5h7.5v7H8" fill="none" stroke="#888"/>`)}
        ${ic(11, 11, svg`<path d="M0.5 0.5l10 10M10.5 0.5l-10 10" stroke="#888"/>`)}
      </div>
    </div>`;
  }

  renderMenu() {
    return html`<div class="menu">
      ${menus.map((m) => html`<span>${m}</span>`)}
      <span class="gapped a">${pageGreen}<span>新建变更</span><i class="caret"></i></span>
      <span class="gapped b">${helper}<span>广小二</span></span>
      <span class="news">在{框}属柱中水平钢筋..</span>
      <span class="gapped user">${userBox}<span>13907298339</span><i class="caret"></i></span>
      <span>造价豆:0</span>
      <span>${bell}</span>
      <span class="chev">&gt;&gt;</span>
    </div>`;
  }

  renderToolbar() {
    return html`<div class="tb1">
      <div class="bar a">
        ${pageNew}${openFolder}<i class="caret"></i>${save}<span class="sep"></span>${undo}<i class="caret"></i>
        <span class="chev">&gt;&gt;</span>
      </div>
      <div class="bar b">
        ${barB.map(tool)}
        <span class="last">量选择</span>
        <span class="chev">&gt;&gt;</span>
      </div>
      <div class="bar c">
        <div class="mode"><span class="box"></span><span>二维</span><i class="caret"></i></div>
        ${barC.map(tool)}
        <span class="chev">&gt;&gt;</span>
      </div>
    </div>`;
  }

  renderNav() {
    return html`<div class="nav">
      <div class="nav-head">
        <span>模块导航栏</span>${pin}${ic(9, 9, svg`<path d="M0.5 0.5l8 8M8.5 0.5l-8 8" stroke="#444"/>`)}
      </div>
      <div class="nav-btn top">工程设置</div>
      <div class="nav-btn">绘图输入</div>
      <div class="plus">${plusLeft}${minusLeft}</div>
      <div class="tree">
        <span class="vline one"></span><span class="vline two"></span>
        ${tree.map((r) => this.renderTreeRow(r))}
        <span class="cursor">
          ${ic(12, 16, svg`<path d="M1 1v12l3-3 2 5 2-1-2-5h4z" fill="#bbb" stroke="#888"/>`)}
        </span>
      </div>
      <div class="nav-btn">单构件输入</div>
      <div class="nav-btn">报表预览</div>
    </div>`;
  }

  renderTreeRow(r: TreeRow) {
    if (r.lv === 0) {
      return html`<div class="row">
        <span class="exp">${r.open ? chevD : chevR}</span><span class="dots"></span>
        ${r.open ? folderOpen : folderClosed}<span class="nm">${bitmap(r.label)}</span>
      </div>`;
    }
    return html`<div class="row ch ${r.last ? 'last' : ''} ${r.sel ? 'sel' : ''}">
      ${r.sel ? html`<span class="mark"></span>` : nothing}
      <span class="branch"></span>${r.icon}<span class="nm">${bitmap(r.label)}</span>
      ${r.sel ? html`<span class="cols"><i></i><i></i></span><span class="newbadge">NE</span>` : nothing}
    </div>`;
  }

  renderSecond() {
    return html`<div class="second">
      ${secondLeft.map(tool)}
      <span class="lbl">楼层</span>
      <div class="floor"><span>第7层</span><i class="caret"></i></div>
      ${secondRight.map(tool)}
    </div>`;
  }

  renderList() {
    return html`<div class="listpane">
      <div class="search"><div class="in">搜索构件...</div><div class="btn">${mag}</div></div>
      <div class="list">
        ${listNames.map(
          (n) => html`<div class="li ${n === 322 ? 'sel' : ''}">
            <span class="h"></span>${gear}<span class="nm"><span class="lat">ZDYX-${n}</span></span>
          </div>`
        )}
        <div class="scroll">${chevU}<span class="thumb"></span>${chevD}</div>
      </div>
    </div>`;
  }

  renderProps() {
    return html`<div class="props">
      <div class="ptab">属性编辑</div>
      <div class="pbody">
        <div class="grid">
          <div class="hd corner"></div><div class="hd">属性名称</div>
          <div class="n on">1</div><div class="on2">名称</div>
          <div class="n">2</div><div>构件类型</div>
          <div class="n">3</div><div class="blue">截面形状</div>
          <div class="n">4</div><div class="gray">${bitmap('截面宽度(mm)')}</div>
          <div class="n">5</div><div class="gray">${bitmap('截面高度(mm)')}</div>
        </div>
      </div>
    </div>`;
  }

  renderWindow() {
    return html`<div class="win">
        <div class="wt">截面编辑</div>
        <div class="inner">
          <div class="tabs"><span class="on">截面</span><span>配筋</span></div>
          <div class="page">
            <div class="edit"><span class="grip"></span>${editBar.map(tool)}</div>
            <div class="fields">
              <div class="radios">
                <span class="rd"><i class="on"></i>不偏移</span>
                <span class="rd"><i></i>正交</span>
                <span class="rd"><i></i>极坐标</span>
              </div>
              <span class="sep"></span>
              <span class="lab">X =</span>
              <span class="num">0</span>
              <span class="lab mm">mm</span>
              <span class="lab yy">Y =</span>
              <span class="num">0</span>
              <span class="lab mm">mm</span>
            </div>
            <svg class="cad" viewBox="543 243 790 397">${cad}</svg>
            <div class="dyn"><span>动态输入</span></div>
          </div>
          <div class="wstat">
            <div class="c1">坐标 <span class="co">(X: 1186 Y: 10</span></div>
            <div class="c2">选择钢筋进行编辑，选择标注进行修改或移动;</div>
          </div>
        </div>
      </div>
      <div class="pscroll">${chevU}<span class="thumb2"></span>${chevD}</div>`;
  }

  renderDialog() {
    return html`<div class="dlg">
      <div class="dt"><span>定义网格</span>${ic(13, 13, svg`<path d="M1 1l11 11M12 1L1 12" stroke="#222" stroke-width="1.1"/>`)}</div>
      <div class="grp">
        <label>${bitmap('水平方向间距(mm)=>间距*个数,间距,间距*个数,间距,...')}</label>
        <div class="ta"></div>
      </div>
      <div class="grp">
        <label>${bitmap('垂直方向间距(mm)=>间距*个数,间距,间距*个数,间距,...')}</label>
        <div class="ta">${bitmap('120,30,570,120')}</div>
      </div>
      <div class="btns"><span>确定</span><span>取消</span></div>
    </div>`;
  }

  renderStatus() {
    return html`<div class="status">
      <div class="s0"></div>
      <div class="s1">${bitmap('层高:2.8m')}</div>
      <div class="s2">${bitmap('底标高:20.35m')}</div>
      <div class="s3">${bitmap('0')}</div>
      <div class="s4">名称在当前层当前构件类型下不允许重名</div>
      <div class="s5">${bitmap('220.8 FPS')}</div>
    </div>`;
  }

  renderTask() {
    return html`<div class="task">
      <div class="start">${win}</div>
      <div class="find">
        <span class="o"></span><span>在这里输入你要搜索的内容</span>
        <span class="mic">${ic(12, 19, svg`<rect x="3.5" y="0.5" width="5" height="11" rx="2.5" fill="none" stroke="#333"/><path d="M1 7v2c0 6 10 6 10 0V7M6 15v3M2 18.5h8" fill="none" stroke="#333"/>`)}</span>
      </div>
      <div class="apps">
        ${taskView}
        <span class="a1">${fan}</span>
        <span class="a2">${ie}</span>
        <span class="a3">${swirl}</span>
        <span class="line"></span>
        <span class="under q">${quest}</span>
        <span class="under">${bluePlus}</span>
        <span class="active">${mapApp}</span>
      </div>
      <div class="updown">${chevU}${chevD}</div>
      <div class="tray">
        <span class="line"></span>
        <span class="gap">链接</span>
        <span class="g2">${person}</span>
        <span class="g3">${caretUp}</span>
        <span class="g4">${trayBell}</span>
        <span class="g5">${plug}</span>
        <span class="g5">${wifi}</span>
        <span class="g5">${speaker}</span>
        <span class="g5">${keyb}</span>
        <span class="zh">中</span>
        <span class="s">${sogouS(16, 18)}</span>
        <div class="clock">13:44<br />2018/8/30</div>
        <span class="nt">${notif}</span>
      </div>
    </div>`;
  }

  renderOverlays() {
    return html`
      <div class="speed">
        <div class="ball">76%</div>
        <span class="up">${ic(8, 10, svg`<path d="M4 0l4 5H5.5v5h-3V5H0z" fill="#e2553a"/>`)}</span>
        <span class="dn">${ic(8, 10, svg`<path d="M4 10l4-5H5.5V0h-3v5H0z" fill="#3aa04a"/>`)}</span>
        <span class="r top">0K/s</span>
        <span class="r bot">0K/s</span>
        <span class="pl">+</span><span class="dot"></span>
      </div>
      <div class="ime">
        <b>中</b><span class="punct">°,</span>
        ${ic(18, 18, svg`<circle cx="9" cy="9" r="7.5" fill="none" stroke="#1a6fc4" stroke-width="1.5"/><circle cx="6.5" cy="7" r="1" fill="#1a6fc4"/><circle cx="11.5" cy="7" r="1" fill="#1a6fc4"/><path d="M5.5 11c2 2.5 5 2.5 7 0" fill="none" stroke="#1a6fc4" stroke-width="1.3"/>`)}
        ${ic(14, 18, svg`<rect x="4" y="0" width="6" height="11" rx="3" fill="#1a6fc4"/><path d="M1 8c0 6 12 6 12 0M7 13v4M3 17h8" fill="none" stroke="#1a6fc4" stroke-width="1.3"/>`)}
        ${ic(16, 14, svg`<rect x="0" y="0" width="16" height="14" rx="2" fill="#1a6fc4"/><path d="M2 4h12M2 7h12" stroke="#fff" stroke-dasharray="1.5 1"/><path d="M4 10.5h8" stroke="#fff" stroke-width="1.4"/>`)}
        ${ic(16, 17, svg`<circle cx="7" cy="4" r="3.5" fill="#b8c4d0"/><path d="M1 12c0-5 12-5 12 0z" fill="#b8c4d0"/><rect x="3" y="10" width="13" height="7" fill="#c8d0d8"/>`)}
        ${ic(15, 15, svg`<path d="M4 0h7l4 4-2 3-2-1v9H4V6L2 7 0 4z" fill="#1a6fc4"/>`)}
        ${ic(16, 17, svg`<path d="M2 16L10 7M10 7a4 4 0 014-6l-2 3 2 2 3-2a4 4 0 01-7 3" fill="#1a6fc4" stroke="#1a6fc4" stroke-width="2"/>`)}
      </div>
      <span class="s-logo">${sogouS(25, 28)}</span>
      <div class="red one"></div>
      <div class="red two"></div>
    `;
  }
}
